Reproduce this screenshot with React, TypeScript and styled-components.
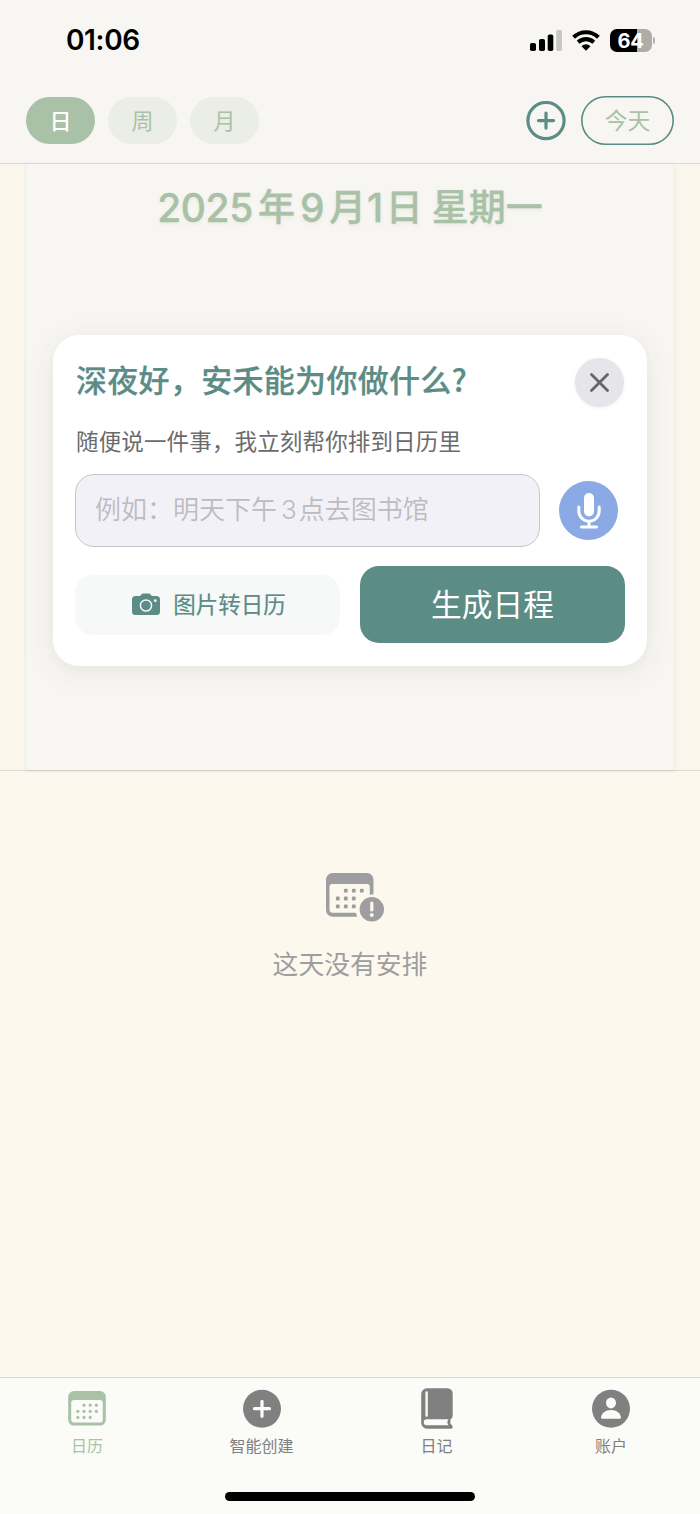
import React from "react";
import styled, { createGlobalStyle, css } from "styled-components";

const sage = "#a9c1a6";
const teal = "#5b8c85";

const GlobalStyle = createGlobalStyle`
  * { box-sizing: border-box; }
  body { margin: 0; background: #fdf8ed; }
  button { border: 0; padding: 0; background: none; font: inherit; color: inherit; }
`;

const Screen = styled.div`
  width: 700px;
  height: 1514px;
  display: flex;
  flex-direction: column;
  overflow: hidden;
  background: #fdf8ed;
  font-family: Inter, "Noto Sans CJK SC", sans-serif;
  white-space: nowrap;
`;

const Header = styled.header`
  height: 164px;
  flex: none;
  background: #f8f6f2;
  border-bottom: 1px solid #d9dad6;
`;

const StatusBar = styled.div`
  height: 80px;
  display: flex;
  justify-content: space-between;
  align-items: center;
  padding: 0 45px 0 66px;
`;

const Clock = styled.time`
  font-size: 28px;
  line-height: 34px;
  font-weight: 600;
  color: #000;
  letter-spacing: -0.35px;
`;

const StatusIcons = styled.div`
  display: flex;
  align-items: center;
  gap: 10px;
`;

const Battery = styled.div`
  display: flex;
  align-items: center;
  gap: 1px;
`;

const BatteryBody = styled.div`
  width: 42px;
  height: 23px;
  border-radius: 7px;
  background: linear-gradient(90deg, #000 64.5%, #adaca9 64.5%);
  color: #fff;
  font-size: 20px;
  line-height: 24px;
  font-weight: 700;
  text-align: center;
  letter-spacing: -0.3px;
  padding-right: 1px;
`;

const BatteryCap = styled.div`
  width: 2px;
  height: 7px;
  border-radius: 0 2px 2px 0;
  background: #b3b2af;
`;

const Toolbar = styled.div`
  height: 81px;
  display: flex;
  align-items: center;
  justify-content: space-between;
  padding: 0 26px;
`;

const Group = styled.div<{ $gap: number }>`
  display: flex;
  align-items: center;
  gap: ${(p) => p.$gap}px;
`;

const ViewTab = styled.button<{ $active?: boolean }>`
  width: 69px;
  height: 47px;
  border-radius: 23.5px;
  font-size: 22px;
  line-height: 46px;
  color: ${(p) => (p.$active ? "#fff" : sage)};
  background: ${(p) => (p.$active ? sage : "#ebeee7")};
  font-weight: ${(p) => (p.$active ? 500 : 400)};
`;

const AddButton = styled.button`
  width: 40px;
  height: 40px;
  display: flex;
`;

const TodayButton = styled.button`
  width: 93px;
  height: 49px;
  background: #f8f6f2;
  box-shadow: inset 0 0 0 1.6px ${teal};
  border-radius: 24.5px;
  color: ${sage};
  font-size: 22.8px;
  line-height: 48px;
`;

const Hero = styled.section`
  height: 607px;
  flex: none;
  padding: 0 26px;
  background: #fbf6eb;
  border-bottom: 1px solid #d9d9d2;
`;

const HeroPanel = styled.div`
  height: 606px;
  display: flex;
  flex-direction: column;
  align-items: center;
  background: #f8f6f2;
  box-shadow: 0 1px 3px rgba(90, 90, 60, 0.14);
`;

const DateTitle = styled.h1`
  margin: 16px 0 0;
  height: 56px;
  display: flex;
  align-items: center;
  color: ${sage};
  font-size: 37px;
  line-height: 56px;
  font-weight: 500;
  -webkit-text-stroke: 0.3px ${sage};
  text-shadow: 0 2px 4px rgba(120, 140, 110, 0.12);
`;

const DateNumber = styled.span<{ $before?: number; $after?: number }>`
  font-size: 39px;
  font-weight: 550;
  letter-spacing: -0.4px;
  margin-left: ${(p) => p.$before ?? 0}px;
  margin-right: ${(p) => p.$after ?? 0}px;
`;

const Weekday = styled.span`
  margin-left: 9px;
`;

const Card = styled.div`
  width: 594px;
  height: 331px;
  margin-top: 99px;
  padding: 23px 23px 22px;
  border-radius: 26px;
  background: #fff;
  box-shadow: 0 6px 30px rgba(70, 70, 50, 0.08), 0 2px 8px rgba(70, 70, 50, 0.03);
`;

const CardHead = styled.div`
  display: flex;
  justify-content: space-between;
  height: 49px;
`;

const CardTitle = styled.h2`
  margin: 0;
  color: ${teal};
  font-size: 31px;
  line-height: 42px;
  font-weight: 500;
  -webkit-text-stroke: 0.25px ${teal};
  letter-spacing: 0.3px;
  font-family: "Noto Sans CJK SC", sans-serif;
`;

const CloseButton = styled.button`
  width: 49px;
  height: 49px;
  border-radius: 50%;
  display: grid;
  place-items: center;
  background: #e5e5ea;
  box-shadow: 0 1px 4px rgba(0, 0, 0, 0.06);
`;

const Hint = styled.p`
  margin: 19px 0 16px;
  color: #6b6b6b;
  font-size: 22.5px;
  line-height: 32px;
  letter-spacing: 0.15px;
`;

const InputRow = styled.div`
  display: flex;
  align-items: center;
  justify-content: space-between;
  padding-right: 6px;
  margin-left: -1px;
`;

const PromptField = styled.div`
  width: 465px;
  height: 73px;
  padding-left: 19px;
  border: 1px solid #c6c6ca;
  border-radius: 19px;
  background: #f2f1f7;
  color: #bcbcc0;
  font-size: 26px;
  line-height: 70px;
  font-weight: 350;
`;

const FieldNumber = styled.span`
  margin: 0 2px 0 4px;
`;

const MicButton = styled.button`
  width: 59px;
  height: 59px;
  border-radius: 50%;
  background: #8aa9e5;
  display: grid;
  place-items: center;
`;

const Actions = styled.div`
  display: flex;
  align-items: center;
  gap: 20px;
  margin: 19px -1px 0;
`;

const ActionButton = styled.button<{ $primary?: boolean }>`
  width: 265px;
  display: flex;
  align-items: center;
  justify-content: center;
  gap: 13px;
  ${(p) =>
    p.$primary
      ? css`
          height: 77px;
          border-radius: 19px;
          background: ${teal};
          color: #fff;
          font-size: 30.7px;
          padding-bottom: 4px;
        `
      : css`
          height: 60px;
          border-radius: 18px;
          background: #f6f9f8;
          color: ${teal};
          font-size: 22.5px;
          font-weight: 400;
          -webkit-text-stroke: 0.2px ${teal};
          padding-left: 3px;
        `}
`;

const ActionLabel = styled.span`
  margin-top: -3px;
`;

const EmptyState = styled.main`
  flex: 1;
  display: flex;
  flex-direction: column;
  align-items: center;
  padding-top: 101px;
  color: #9e9ea0;
  font-size: 25.8px;
  line-height: 38px;
`;

const EmptyText = styled.p`
  margin: 24px 0 0;
`;

const BottomBar = styled.nav`
  height: 137px;
  flex: none;
  border-top: 1px solid #d5d6ce;
  background: #fbfbf7;
  display: flex;
  flex-direction: column;
  align-items: center;
`;

const NavItems = styled.div`
  width: 700px;
  height: 114px;
  display: grid;
  grid-template-columns: 174px 175px 175px 174px;
`;

const NavItem = styled.button<{ $active?: boolean }>`
  display: flex;
  flex-direction: column;
  align-items: center;
  padding-top: 9px;
  color: ${(p) => (p.$active ? sage : "#808080")};
  font-size: 16px;
  line-height: 24px;
`;

const NavLabel = styled.span`
  margin-top: 5px;
`;

const HomeIndicator = styled.div`
  width: 250px;
  height: 9px;
  border-radius: 5px;
  background: #000;
`;

const Signal = () => (
  <svg width="32" height="21" viewBox="0 0 32 21">
    <rect x="0" y="13" width="6" height="8" rx="1.8" />
    <rect x="9" y="9" width="6" height="12" rx="1.8" />
    <rect x="17.7" y="4.500" width="5.600" height="16.500" rx="1.8" />
    <rect x="26.300" y="0" width="5.700" height="21" rx="1.800" fill="#c8c7c4" />
  </svg>
);

const Wifi = () => (
  <svg width="28" height="21" viewBox="0 0 28 21" fill="none" stroke="#000" strokeWidth="4.1">
    <path d="M1.600 7.300A17.800 17.800 0 0 1 26.400 7.300" />
    <path d="M6.200 12.200A11.300 11.300 0 0 1 21.800 12.200" />
    <path d="M14 20.700l-4.500-4.500a6.400 6.400 0 0 1 9 0z" fill="#000" stroke="none" />
  </svg>
);

const PlusCircle = () => (
  <svg width="40" height="40" viewBox="0 0 40 40" fill="none" stroke={teal} strokeLinecap="round">
    <circle cx="20" cy="19.600" r="18.100" strokeWidth="3.200" />
    <path d="M20 12.100v15M12.500 19.600h15" strokeWidth="3.200" />
  </svg>
);

const Cross = () => (
  <svg width="20" height="20" viewBox="0 0 20 20" stroke="#666" strokeWidth="2.800" strokeLinecap="round">
    <path d="M1.500 1.500l16 16M17.500 1.500L1.500 17.500" />
  </svg>
);

const Mic = () => (
  <svg width="24" height="36" viewBox="0 0 24 36" fill="none" stroke="#fff" strokeLinecap="round">
    <rect x="7" y="0" width="10" height="23.500" rx="5" fill="#fff" stroke="none" />
    <path d="M1.800 14v4a10.200 10.200 0 0 0 20.400 0v-4M12 28.500v5" strokeWidth="3" />
    <path d="M4.500 34h15" strokeWidth="3.200" />
  </svg>
);

const Camera = () => (
  <svg width="28" height="23" viewBox="0 0 28 23">
    <path
      d="M3.500 3H7c1 0 1.500-.4 2-1.100C9.900.600 10.500.500 11.800.500h4.400c1.300 0 1.900.1 2.800 1.400.5.700 1 1.100 2 1.100h3.500A3.500 3.500 0 0 1 28 6.500v12a3.500 3.500 0 0 1-3.500 3.500h-21A3.500 3.500 0 0 1 0 18.500v-12A3.500 3.500 0 0 1 3.500 3z"
      fill={teal}
    />
    <circle cx="14" cy="12.500" r="5.600" fill="none" stroke="#f6f9f8" strokeWidth="1.500" />
    <circle cx="23.300" cy="7.700" r="1.400" fill="#f6f9f8" />
  </svg>
);

const EmptyCalendar = () => (
  <svg width="50" height="50" viewBox="0 0 50 50" overflow="visible" fill="#9e9ea0">
    <path
      fillRule="evenodd"
      d="M7.500 1h34.500a6.500 6.500 0 0 1 6.500 6.500V22.300q-2.100 0-3.700.6V15q0-3-3-3H7.500q-3 0-3 3v22.700q0 3 3 3H31q.3 2 1.200 4H7.500A6.500 6.500 0 0 1 1 38.300V7.500A6.500 6.500 0 0 1 7.500 1z"
    />
    {[[20.800, 18.700], [28.800, 18.700], [36.800, 18.700], [12.800, 26.500], [20.800, 26.500], [28.800, 26.500], [12.800, 34.400], [20.800, 34.400], [28.800, 34.400]].map(([x, y]) => (
      <rect key={`${x}-${y}`} x={x - 1.9} y={y - 1.9} width="3.800" height="3.800" rx=".9" />
    ))}
    <circle cx="46.800" cy="37.300" r="12.200" />
    <path d="M46.800 31v7" stroke="#fdf8ed" strokeWidth="3.200" strokeLinecap="round" />
    <circle cx="46.800" cy="43" r="2" fill="#fdf8ed" />
  </svg>
);

const NavCalendar = () => (
  <svg width="38" height="42" viewBox="0 0 38 42" fill="currentColor">
    <path
      fillRule="evenodd"
      d="M6 4h26a5.800 5.800 0 0 1 5.800 5.800v23a5.800 5.800 0 0 1-5.800 5.800H6A5.800 5.800 0 0 1 .2 32.800v-23A5.800 5.800 0 0 1 6 4zM6 13q-2.800 0-2.800 2.800v16.900q0 2.800 2.800 2.800h26q2.800 0 2.800-2.800V15.800Q34.800 13 32 13z"
    />
    {[[16, 18.200], [22.200, 18.200], [28.400, 18.200], [9.800, 24.300], [16, 24.300], [22.200, 24.300], [28.400, 24.300], [9.800, 30.400], [16, 30.400], [22.200, 30.400]].map(([x, y]) => (
      <circle key={`${x}-${y}`} cx={x} cy={y} r="1.600" />
    ))}
  </svg>
);

const NavPlus = () => (
  <svg width="38" height="42" viewBox="0 0 38 42">
    <circle cx="19" cy="21.700" r="19" fill="currentColor" />
    <path d="M19 14.300v15M11.500 21.700h15" stroke="#fbfbf7" strokeWidth="3.200" strokeLinecap="round" />
  </svg>
);

const NavBook = () => (
  <svg width="32" height="42" viewBox="0 0 32 42">
    <path
      fillRule="evenodd"
      fill="currentColor"
      d="M6 1.200h20.500A5.200 5.200 0 0 1 31.700 6.500v22q0 2.800-2.300 4v4.300q2 1.400 2.300 3 .1 1.900-1.500 1.900H6A5.800 5.800 0 0 1 .2 35.900V7A5.800 5.800 0 0 1 6 1.200zM5.700 32.300a2.900 2.900 0 0 0 0 5.900H27.500q-2.300-3 0-5.900zM5.800 4.200q-1.400 0-1.400 1v23.700q0 .8.800.8h.8q.8 0 .8-.8V5.200q0-1-1-1z"
    />
  </svg>
);

const NavAccount = () => (
  <svg width="38" height="42" viewBox="0 0 38 42">
    <circle cx="19" cy="21.700" r="19" fill="currentColor" />
    <ellipse cx="19" cy="15.900" rx="5" ry="5.500" fill="#fbfbf7" />
    <path d="M10.300 31.800q-1.300 0-1.300-1.300c.4-4.200 4.500-7.600 10-7.600s9.600 3.400 10 7.600q0 1.300-1.300 1.300z" fill="#fbfbf7" />
  </svg>
);

export default function App() {
  return (
    <Screen>
      <GlobalStyle />
      <Header>
        <StatusBar>
          <Clock>01:06</Clock>
          <StatusIcons>
            <Signal />
            <Wifi />
            <Battery>
              <BatteryBody>64</BatteryBody>
              <BatteryCap />
            </Battery>
          </StatusIcons>
        </StatusBar>
        <Toolbar>
          <Group $gap={13}>
            <ViewTab $active>日</ViewTab>
            <ViewTab>周</ViewTab>
            <ViewTab>月</ViewTab>
          </Group>
          <Group $gap={15}>
            <AddButton aria-label="添加"><PlusCircle /></AddButton>
            <TodayButton>今天</TodayButton>
          </Group>
        </Toolbar>
      </Header>

      <Hero>
        <HeroPanel>
          <DateTitle>
            <DateNumber $after={5}>2025</DateNumber>年
            <DateNumber $before={5} $after={5}>9</DateNumber>月
            <DateNumber $before={1} $after={3}>1</DateNumber>日
            <Weekday>星期一</Weekday>
          </DateTitle>
          <Card>
            <CardHead>
              <CardTitle>深夜好，安禾能为你做什么?</CardTitle>
              <CloseButton aria-label="关闭"><Cross /></CloseButton>
            </CardHead>
            <Hint>随便说一件事，我立刻帮你排到日历里</Hint>
            <InputRow>
              <PromptField>例如：明天下午<FieldNumber>3</FieldNumber>点去图书馆</PromptField>
              <MicButton aria-label="语音"><Mic /></MicButton>
            </InputRow>
            <Actions>
              <ActionButton><Camera /><ActionLabel>图片转日历</ActionLabel></ActionButton>
              <ActionButton $primary>生成日程</ActionButton>
            </Actions>
          </Card>
        </HeroPanel>
      </Hero>

      <EmptyState>
        <EmptyCalendar />
        <EmptyText>这天没有安排</EmptyText>
      </EmptyState>

      <BottomBar>
        <NavItems>
          <NavItem $active><NavCalendar /><NavLabel>日历</NavLabel></NavItem>
          <NavItem><NavPlus /><NavLabel>智能创建</NavLabel></NavItem>
          <NavItem><NavBook /><NavLabel>日记</NavLabel></NavItem>
          <NavItem><NavAccount /><NavLabel>账户</NavLabel></NavItem>
        </NavItems>
        <HomeIndicator />
      </BottomBar>
    </Screen>
  );
}
